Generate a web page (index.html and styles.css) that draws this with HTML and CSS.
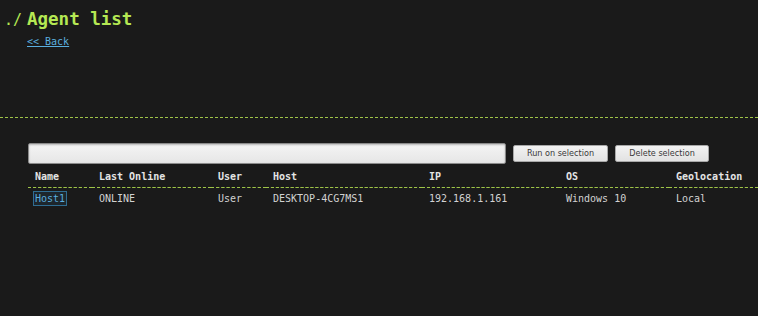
FILE: index.html
```html
<!DOCTYPE html>
<html>
<head>
<meta charset="utf-8">
<link rel="stylesheet" href="styles.css">
</head>
<body>
<header class="top">
  <h1 class="title"><span class="prompt">./</span>Agent list</h1>
  <a class="back" href="#">&lt;&lt; Back</a>
</header>
<main class="content">
  <div class="controls">
    <input class="cmd" type="text">
    <button class="btn btn-run">Run on selection</button>
    <button class="btn btn-del">Delete selection</button>
  </div>
  <table class="agents">
    <colgroup>
      <col class="c-name"><col class="c-last"><col class="c-user"><col class="c-host"><col class="c-ip"><col class="c-os"><col class="c-geo">
    </colgroup>
    <thead>
      <tr><th>Name</th><th>Last Online</th><th>User</th><th>Host</th><th>IP</th><th>OS</th><th>Geolocation</th></tr>
    </thead>
    <tbody>
      <tr><td><a class="host" href="#">Host1</a></td><td>ONLINE</td><td>User</td><td>DESKTOP-4CG7MS1</td><td>192.168.1.161</td><td>Windows 10</td><td>Local</td></tr>
    </tbody>
  </table>
</main>
</body>
</html>
```
FILE: styles.css
```css
html, body {
  margin: 0;
  padding: 0;
}
body {
  background: #1a1a1a;
  color: #d6d6d6;
  font-family: "DejaVu Sans Mono", "Liberation Mono", monospace;
  font-size: 10px;
  line-height: 12px;
  width: 758px;
  height: 316px;
  overflow: hidden;
}
.top {
  height: 118px;
  box-sizing: border-box;
  padding: 9px 0 0 27px;
  border-bottom: 1px dashed #9ec447;
}
.title {
  margin: 0;
  font-size: 17.5px;
  line-height: 20px;
  font-weight: bold;
  color: #b5e853;
}
.prompt {
  display: inline-block;
  width: 23px;
  margin-left: -23px;
  font-size: 15px;
  font-weight: normal;
}
.back {
  display: inline-block;
  margin-top: 6px;
  color: #5aaedf;
  text-decoration: underline;
}
.content {
  padding: 25px 0 0 28px;
}
.controls {
  display: flex;
  align-items: center;
  gap: 7px;
  height: 21px;
}
.cmd {
  width: 478px;
  height: 21px;
  box-sizing: border-box;
  margin: 0;
  border: 1px solid #8a8a8a;
  border-radius: 2px;
  background: linear-gradient(#f4f4f4, #e6e6e6);
  box-shadow: inset 0 1px 2px rgba(0,0,0,0.25);
}
.btn {
  height: 17px;
  box-sizing: border-box;
  margin: 0;
  padding: 0;
  border: 1px solid #a8a8a8;
  border-radius: 2px;
  background: linear-gradient(#f2f2f2, #e2e2e2);
  color: #3a3a3a;
  font-family: "DejaVu Sans Condensed", "Liberation Sans", sans-serif;
  font-size: 9px;
  line-height: 15px;
}
.btn-run { width: 95px; }
.btn-del { width: 94px; }
.agents {
  margin-top: 2px;
  width: 730px;
  table-layout: fixed;
  border-collapse: collapse;
}
.c-name { width: 64px; }
.c-last { width: 119px; }
.c-user { width: 55px; }
.c-host { width: 156px; }
.c-ip { width: 137px; }
.c-os { width: 110px; }
.c-geo { width: 89px; }
.agents th {
  text-align: left;
  font-weight: bold;
  color: #e4e4e4;
  padding: 5px 7px 4px;
  border-bottom: 1px dashed #9ec447;
  white-space: nowrap;
}
.agents td {
  padding: 5px 7px 4px;
  white-space: nowrap;
  color: #d2d2d2;
}
.host {
  color: #5aaedf;
  text-decoration: none;
  background: rgba(47, 109, 146, 0.15);
  border: 1px solid #2f6d92;
  padding: 1px 1px;
  margin-left: -2px;
}
```
